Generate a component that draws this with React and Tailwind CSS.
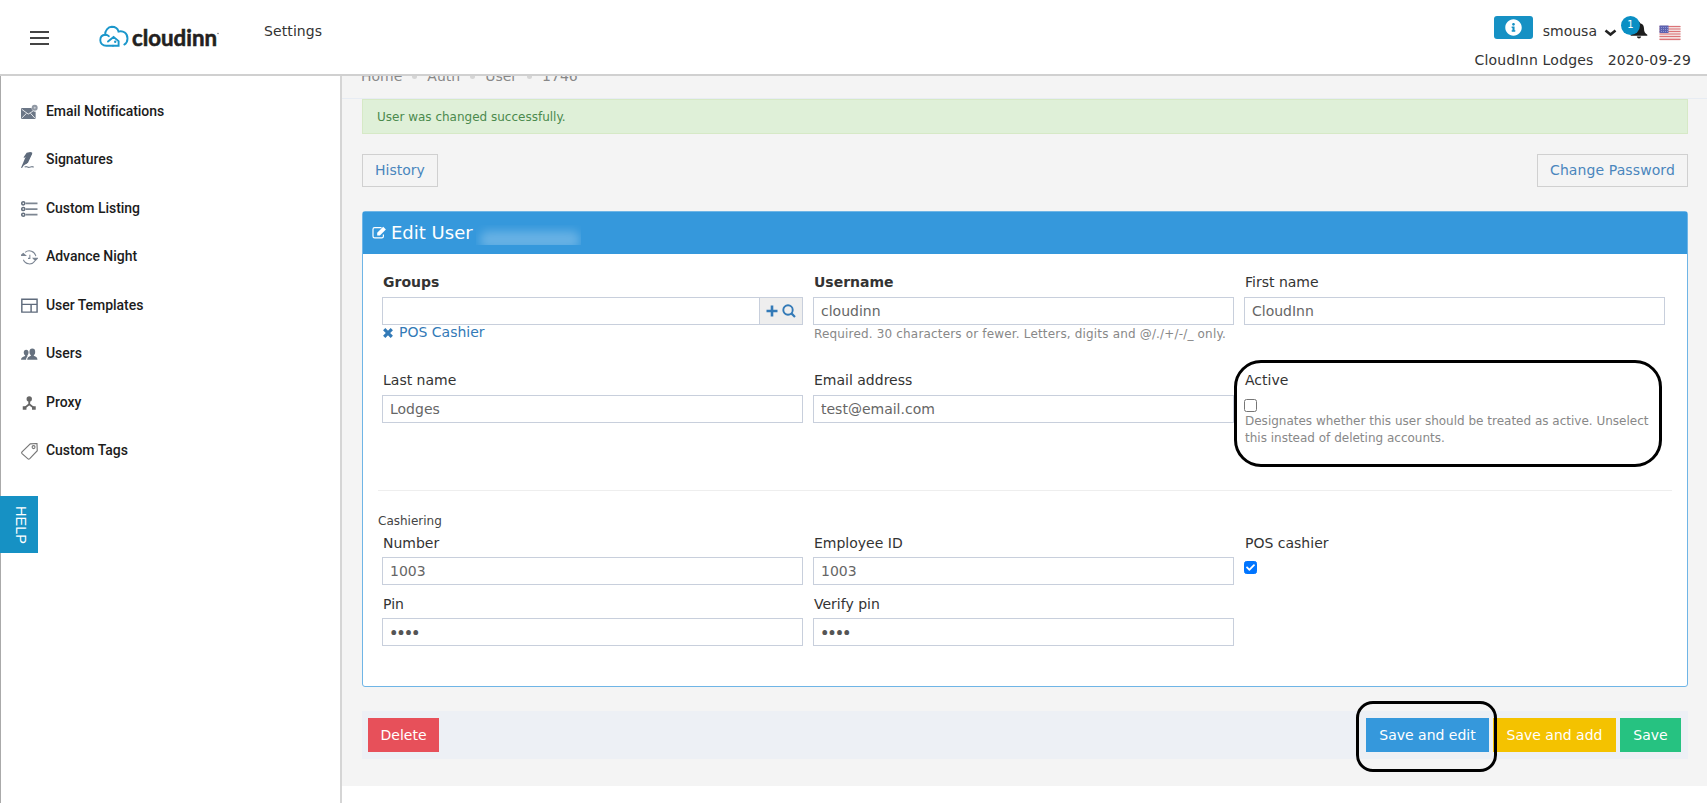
import { useState } from "react";
import { FaCheck, FaInfoCircle } from "react-icons/fa";

const menuItems = [
  { label: "Email Notifications", icon: "mail" },
  { label: "Signatures", icon: "pen" },
  { label: "Custom Listing", icon: "list" },
  { label: "Advance Night", icon: "night" },
  { label: "User Templates", icon: "template" },
  { label: "Users", icon: "users" },
  { label: "Proxy", icon: "proxy" },
  { label: "Custom Tags", icon: "tag" },
];

const icons = {
  mail: (
    <g fill="#6b7686">
      <path d="M1 4h9.200a3.600 3.600 0 0 0 4 3.400V13.500a1 1 0 0 1-1 1H1a1 1 0 0 1-1-1V5a1 1 0 0 1 1-1Z" />
      <path
        d="M.8 5.200l6.200 4.600L11.500 7M.8 13.600l4.600-4.600M13.400 13.600l-4.200-4.600"
        fill="none"
        stroke="#fff"
        strokeWidth="0.8"
      />
      <circle cx="13.300" cy="3.700" r="2.900" opacity="0.75" />
      <circle cx="13.300" cy="3.700" r="1" fill="#fff" opacity="0.5" />
    </g>
  ),
  pen: (
    <g fill="#5f6b7c">
      <path d="M5.500.8 9 0Q11.500 0 10.800 1.800L6.800 10.500 2.600 13 1 15.500 0 15.200l2.200-5L4.500 4.500 3 5.800 2.500 5Z" />
      <path d="M9.800 1.500 4.800 11" stroke="#5f6b7c" strokeWidth="1.800" />
      <path
        d="M3.500 14.600q1.600-.8 2.900 0t2.900 0 3 .2"
        fill="none"
        stroke="#7b8593"
        strokeWidth="1.200"
      />
    </g>
  ),
  list: (
    <g fill="none" stroke="#66717f">
      <circle cx="2.200" cy="2.300" r="1.500" strokeWidth="1.500" />
      <circle cx="2.200" cy="7.800" r="1.500" strokeWidth="1.500" />
      <circle cx="2.200" cy="13.300" r="1.500" strokeWidth="1.500" />
      <path
        d="M4.500 2.300H16M4.500 7.800H16M4.500 13.300H16"
        strokeWidth="1.700"
        opacity="0.85"
      />
    </g>
  ),
  night: (
    <g fill="none" stroke="#7b8593" strokeWidth="1">
      <path d="M4 3.200A6.500 6.500 0 0 1 14.400 7M13.400 11.800A6.400 6.400 0 0 1 2.300 10.500" />
      <path d="M8.600 5.500v3.600H6.800" />
      <path d="M0 6.200 2.200 4.400l2.200 1.800Z M11.800 9h4.200L13.800 11.200Z" fill="#66717f" />
    </g>
  ),
  template: (
    <g fill="none" stroke="#5f6b7c" strokeWidth="1.400">
      <path d="M.8 1.200h14.800v12.500H.8ZM.8 6.200h14.800M9.800 6.200v7.500" />
    </g>
  ),
  users: (
    <g fill="#66717f">
      <ellipse cx="11" cy="5.800" rx="2.800" ry="3.300" />
      <path d="M9.600 7h2.800v2.500q3.600 1 3.600 3.900H6q0-2.900 3.600-3.900Z" />
      <ellipse cx="5" cy="6.400" rx="2.300" ry="2.800" />
      <path d="M4 8h2.200v2.200q-1.300 1.300-1.300 3.200H0q0-2.500 4-3.600Z" />
    </g>
  ),
  proxy: (
    <g fill="#666">
      <circle cx="8" cy="3.800" r="2.600" />
      <path
        d="M8 5.500V9L3.500 12.500M8 9l4.500 3.500"
        fill="none"
        stroke="#666"
        strokeWidth="1.800"
      />
      <path d="M1.700 10.900h3.600v3.400H1.700ZM10.700 10.900h3.600v3.400h-3.600Z" />
    </g>
  ),
  tag: (
    <g fill="none" stroke="#777" strokeWidth="1.100">
      <path d="M9 .8 15.500.5 15.800 7.500 8.500 15.200q-1 .8-2 0L1 10.300q-.7-.8 0-1.600Z" />
      <circle cx="12.200" cy="4" r="1.400" />
    </g>
  ),
};

const Logo = () => (
  <svg className="h-[28px] w-[124px] overflow-visible" viewBox="0 0 124 28">
    <g fill="none" stroke="#1b97cb" strokeWidth="1.900" strokeLinecap="round">
      <path d="M14 20.800H7.300C3.500 20.800 1.300 18 1.300 15.200c0-3 2-5.200 4.900-5.400C5.800 5.600 9 2 12.800 1.800c3.600 0 6 2 6.700 4.800 4.700-1.300 9 1.700 9 6.800 0 2.800-1.200 4.900-3.200 6.200" />
      <path d="M6.200 9.800c1.400 0 2.800.5 3.600 1.400M9 16.600l5.600-4.700 5 4.200V20.800H14" />
    </g>
    <circle cx="16.200" cy="16.800" r="1.200" fill="#1b97cb" />
    <text
      x="33"
      y="20.700"
      textLength="85"
      lengthAdjust="spacingAndGlyphs"
      fontSize="23.500"
      fontWeight="700"
      fill="#231f20"
      stroke="#231f20"
      strokeWidth="0.600"
      fontFamily="Lato, sans-serif"
    >
      cloudinn
    </text>
    <circle cx="119" cy="8.500" r="0.800" fill="#777" />
  </svg>
);

const BellIcon = () => (
  <svg className="h-[17px] w-[18px]" viewBox="0 0 18 17">
    <path
      d="M9 0q1 0 1.200 1.200C12.800 1.800 14 3.800 14 6.500c0 3 .8 4.800 3.300 6.300v.9H.7v-.9C3.200 11.300 4 9.500 4 6.500 4 3.800 5.200 1.800 7.800 1.200Q8 0 9 0ZM6.800 14.500h4.400Q10.800 16.500 9 16.500T6.800 14.500Z"
      fill="#1d1d1d"
    />
  </svg>
);

const Flag = () => (
  <svg className="h-[16px] w-[22px]" viewBox="0 0 22 16">
    <rect x="0.500" y="0.500" width="21" height="15" rx="1" fill="#f3dede" />
    <path
      d="M.5 1.500h21M.5 4h21M.5 6.500h21M.5 9h21M.5 11.500h21M.5 14.400h21"
      stroke="#dc7478"
      strokeWidth="1.200"
    />
    <rect x="0.500" y="0.500" width="9" height="7.500" fill="#5c62b0" />
    <path
      d="M2 2.500h7M2 4.500h7M2 6.500h7"
      stroke="#a9acdb"
      strokeWidth="0.700"
      strokeDasharray="1 1"
    />
  </svg>
);

const EditIcon = () => (
  <svg className="mt-px h-[13px] w-[15px]" viewBox="0 0 15 13">
    <path
      d="M9.500 1.600H2.600Q1 1.600 1 3.200v7Q1 11.800 2.600 11.800h7.200q1.600 0 1.600-1.600V8.500"
      fill="none"
      stroke="#fff"
      strokeWidth="1.200"
    />
    <path d="M5.200 6.800 11.200.8l2.700 2.600-6 6H5.200Z" fill="#fff" />
  </svg>
);

const PlusIcon = () => (
  <svg className="-mt-px size-[12px]" viewBox="0 0 12 12">
    <path d="M6 .5v11M.5 6h11" stroke="#337ab7" strokeWidth="2.600" />
  </svg>
);

const SearchIcon = () => (
  <svg className="size-[14px]" viewBox="0 0 14 14">
    <circle cx="6" cy="6" r="4.700" fill="none" stroke="#337ab7" strokeWidth="1.900" />
    <path d="M9.400 9.400 13 13" stroke="#337ab7" strokeWidth="2.200" />
  </svg>
);

const RemoveIcon = () => (
  <svg className="mt-px size-[10px]" viewBox="0 0 10 10">
    <path d="M1.200 1.200l7.600 7.600M8.800 1.200 1.200 8.800" stroke="#337ab7" strokeWidth="3.200" />
  </svg>
);

const Header = () => (
  <header className="flex h-[76px] shrink-0 justify-between border-b-2 border-[#d0d0d0] bg-white">
    <div className="flex">
      <button type="button" className="mt-[31px] ml-[30px] flex h-[14px] w-[19px] flex-col justify-between">
        <span className="h-[2px] w-full bg-[#444]" />
        <span className="h-[2px] w-full bg-[#444]" />
        <span className="h-[2px] w-full bg-[#444]" />
      </button>
      <div className="mt-[25px] ml-[50px]">
        <Logo />
      </div>
      <span className="mt-[21px] ml-[41px] leading-5 tracking-[0.1px]">Settings</span>
    </div>
    <div className="flex flex-col items-end pr-4">
      <div className="mt-4 flex h-6 items-start pr-2.5">
        <button
          type="button"
          className="flex h-[23px] w-[39px] items-center justify-center rounded-[3px] bg-[#1691c4] pb-px text-white"
        >
          <FaInfoCircle className="size-[17px]" />
        </button>
        <span className="mt-[5px] ml-[10px] leading-5">smousa</span>
        <svg className="mt-[13px] ml-[7px] h-[8px] w-[13px]" viewBox="0 0 13 8">
          <path d="M1.500 1.500l5 4 5-4" fill="none" stroke="#222" strokeWidth="2.600" />
        </svg>
        <span className="relative mt-[6px] ml-[13px]">
          <BellIcon />
          <span className="absolute -top-[6px] -left-[9px] flex size-[19px] items-center justify-center rounded-full bg-[#0a8fc4] pb-0.5 text-[10px] text-white">
            1
          </span>
        </span>
        <span className="mt-[9px] ml-[11px]">
          <Flag />
        </span>
      </div>
      <div className="mt-[10px] flex gap-[14px] leading-5 tracking-[0.2px]">
        <span>CloudInn Lodges</span>
        <span>2020-09-29</span>
      </div>
    </div>
  </header>
);

const Sidebar = () => (
  <aside className="flex w-[342px] shrink-0 flex-col border-r-2 border-l border-r-[#d5d5d5] border-l-[#aaa] bg-white pt-[11px]">
    {menuItems.map((item) => (
      <a
        key={item.label}
        className="flex h-[48.500px] items-center gap-2 pl-5 font-[Roboto,sans-serif] text-[14px] font-medium tracking-[-0.040px] text-[#1c1c1c]"
      >
        <svg className="mt-0.5 size-[17px]" viewBox="0 0 16.500 16.500">
          {icons[item.icon]}
        </svg>
        {item.label}
      </a>
    ))}
    <button
      type="button"
      className="mt-[21px] -ml-px flex h-[57px] w-[38px] items-center justify-center bg-[#1691c4] pl-[3px] font-['Liberation_Sans',sans-serif] text-[14.500px] text-white [writing-mode:vertical-rl]"
    >
      HELP
    </button>
  </aside>
);

const Field = ({ label, bold, compact, help, helpClass = "", children }) => (
  <div>
    <label
      className={`block pl-px leading-5 text-[#333] ${compact ? "h-6" : "h-[25px]"} ${bold ? "font-bold" : ""}`}
    >
      {label}
    </label>
    {children}
    {help && <p className={`pl-px text-[12px] leading-[17px] text-[#888] ${helpClass}`}>{help}</p>}
  </div>
);

const TextInput = ({ type = "text", value }) => {
  const [text, setText] = useState(value);

  return (
    <input
      type={type}
      value={text}
      onChange={(e) => setText(e.target.value)}
      className={`block h-[28px] w-full border border-[#c8cfdc] bg-white px-[7px] outline-none ${
        type === "password"
          ? "pt-0.5 font-[Roboto,sans-serif] text-[20.500px] font-bold text-[#555]"
          : "text-[14px] text-[#666]"
      }`}
    />
  );
};

const Checkbox = ({ initial }) => {
  const [checked, setChecked] = useState(initial);

  return (
    <button
      type="button"
      onClick={() => setChecked(!checked)}
      className={`mt-[4px] flex size-[13px] items-center justify-center rounded-[2.500px] border ${
        checked ? "border-[#0075ff] bg-[#0075ff] text-white" : "border-[#767676] bg-white"
      }`}
    >
      {checked && <FaCheck className="size-[9px]" />}
    </button>
  );
};

const EditUserPanel = () => (
  <section className="mt-6 h-[476px] rounded-[3px] border border-[#6fb5e6] bg-white">
    <div className="flex h-[42px] items-center bg-[#3598dc] pb-0.5 pl-[9px] text-white">
      <EditIcon />
      <h2 className="ml-[4px] text-[18px]">Edit User</h2>
      <span className="mt-[6px] ml-[3px] flex h-5 w-[105px] items-end overflow-hidden">
        <span className="-mb-1 ml-1 h-[18px] w-[100px] rounded-lg bg-white/25 blur-[5px]" />
      </span>
    </div>

    <div className="px-[15px]">
      <div className="grid grid-cols-3 gap-x-[10px] pt-[18px] pr-[7px] pl-1">
        <div className="h-[98px]">
          <Field label="Groups" bold>
            <div className="flex">
              <div className="grow">
                <TextInput value="" />
              </div>
              <span className="flex w-[43px] items-center justify-center gap-[4px] border border-l-0 border-[#c8cfdc] bg-[#eee]">
                <PlusIcon />
                <SearchIcon />
              </span>
            </div>
            <a className="-mt-px flex items-center gap-[6px] pl-px leading-[17px] text-[#337ab7]">
              <RemoveIcon />
              POS Cashier
            </a>
          </Field>
        </div>
        <Field
          label="Username"
          bold
          help="Required. 30 characters or fewer. Letters, digits and @/./+/-/_ only."
          helpClass="pt-px tracking-[0.170px]"
        >
          <TextInput value="cloudinn" />
        </Field>
        <Field label="First name">
          <TextInput value="CloudInn" />
        </Field>
        <div className="h-[118px]">
          <Field label="Last name">
            <TextInput value="Lodges" />
          </Field>
        </div>
        <Field label="Email address">
          <TextInput value="test@email.com" />
        </Field>
        <div className="relative">
          <Field
            label="Active"
            help="Designates whether this user should be treated as active. Unselect this instead of deleting accounts."
            helpClass="pt-px"
          >
            <Checkbox initial={false} />
          </Field>
          <div className="pointer-events-none absolute -top-[10px] -left-[10px] h-[107px] w-[428px] rounded-[27px] border-3 border-black" />
        </div>
      </div>

      <hr className="mt-[2px] border-[#eee]" />

      <h3 className="mt-5 text-[12px] leading-5 text-[#444]">Cashiering</h3>
      <div className="grid grid-cols-3 gap-x-[10px] gap-y-[9px] pt-[2px] pr-[7px] pl-1">
        <Field label="Number" compact>
          <TextInput value="1003" />
        </Field>
        <Field label="Employee ID" compact>
          <TextInput value="1003" />
        </Field>
        <Field label="POS cashier" compact>
          <Checkbox initial={true} />
        </Field>
        <Field label="Pin" compact>
          <TextInput type="password" value="1003" />
        </Field>
        <Field label="Verify pin" compact>
          <TextInput type="password" value="1003" />
        </Field>
      </div>
    </div>
  </section>
);

const App = () => {
  return (
    <div className="flex h-[803px] flex-col overflow-hidden bg-white font-['DejaVu_Sans',Verdana,sans-serif] text-[14px] text-[#333]">
      <Header />

      <div className="flex min-h-0 grow">
        <Sidebar />

        <main className="h-[710px] grow overflow-hidden bg-[#f4f4f4]">
          <nav className="flex h-[23px] items-start gap-2 border-b border-[#e7ecf3] pl-[19px] text-[#888]">
            <div className="-mt-[10px] flex items-center leading-5">
              {["Home", "Auth", "User", "1746"].map((crumb, i) => (
                <span key={crumb} className="flex items-center">
                  {i > 0 && <span className="mx-[10px] size-[5px] rounded-full bg-[#d5d5d5]" />}
                  {crumb}
                </span>
              ))}
            </div>
          </nav>

          <div className="pr-[19px] pl-5">
            <div className="flex h-[35px] items-center border border-[#d6e9c6] bg-[#dff0d8] pl-[14px] text-[12px] text-[#4b8a4d]">
              User was changed successfully.
            </div>

            <div className="mt-5 flex justify-between">
              <button type="button" className="h-[33px] w-[76px] border border-[#d0d0d0] text-[#4a86bd]">
                History
              </button>
              <button
                type="button"
                className="h-[33px] w-[151px] border border-[#d0d0d0] tracking-[0.1px] text-[#4a86bd]"
              >
                Change Password
              </button>
            </div>

            <EditUserPanel />

            <div className="mt-6 flex h-[48px] items-center justify-between bg-[#edf0f5] pr-[7px] pl-[6px] text-white">
              <button type="button" className="h-[34px] w-[71px] bg-[#e7505a] pt-px">
                Delete
              </button>
              <div className="flex gap-[4px]">
                <div className="relative">
                  <button type="button" className="h-[34px] w-[123px] bg-[#3598dc] pt-px">
                    Save and edit
                  </button>
                  <div className="pointer-events-none absolute -top-[17px] -left-[10px] z-10 h-[71px] w-[141px] rounded-[17px] border-3 border-black" />
                </div>
                <button type="button" className="h-[34px] w-[123px] bg-[#f4c200] pt-px">
                  Save and add
                </button>
                <button type="button" className="h-[34px] w-[61px] bg-[#26c281] pt-px">
                  Save
                </button>
              </div>
            </div>
          </div>
        </main>
      </div>
    </div>
  );
};

export default App;
